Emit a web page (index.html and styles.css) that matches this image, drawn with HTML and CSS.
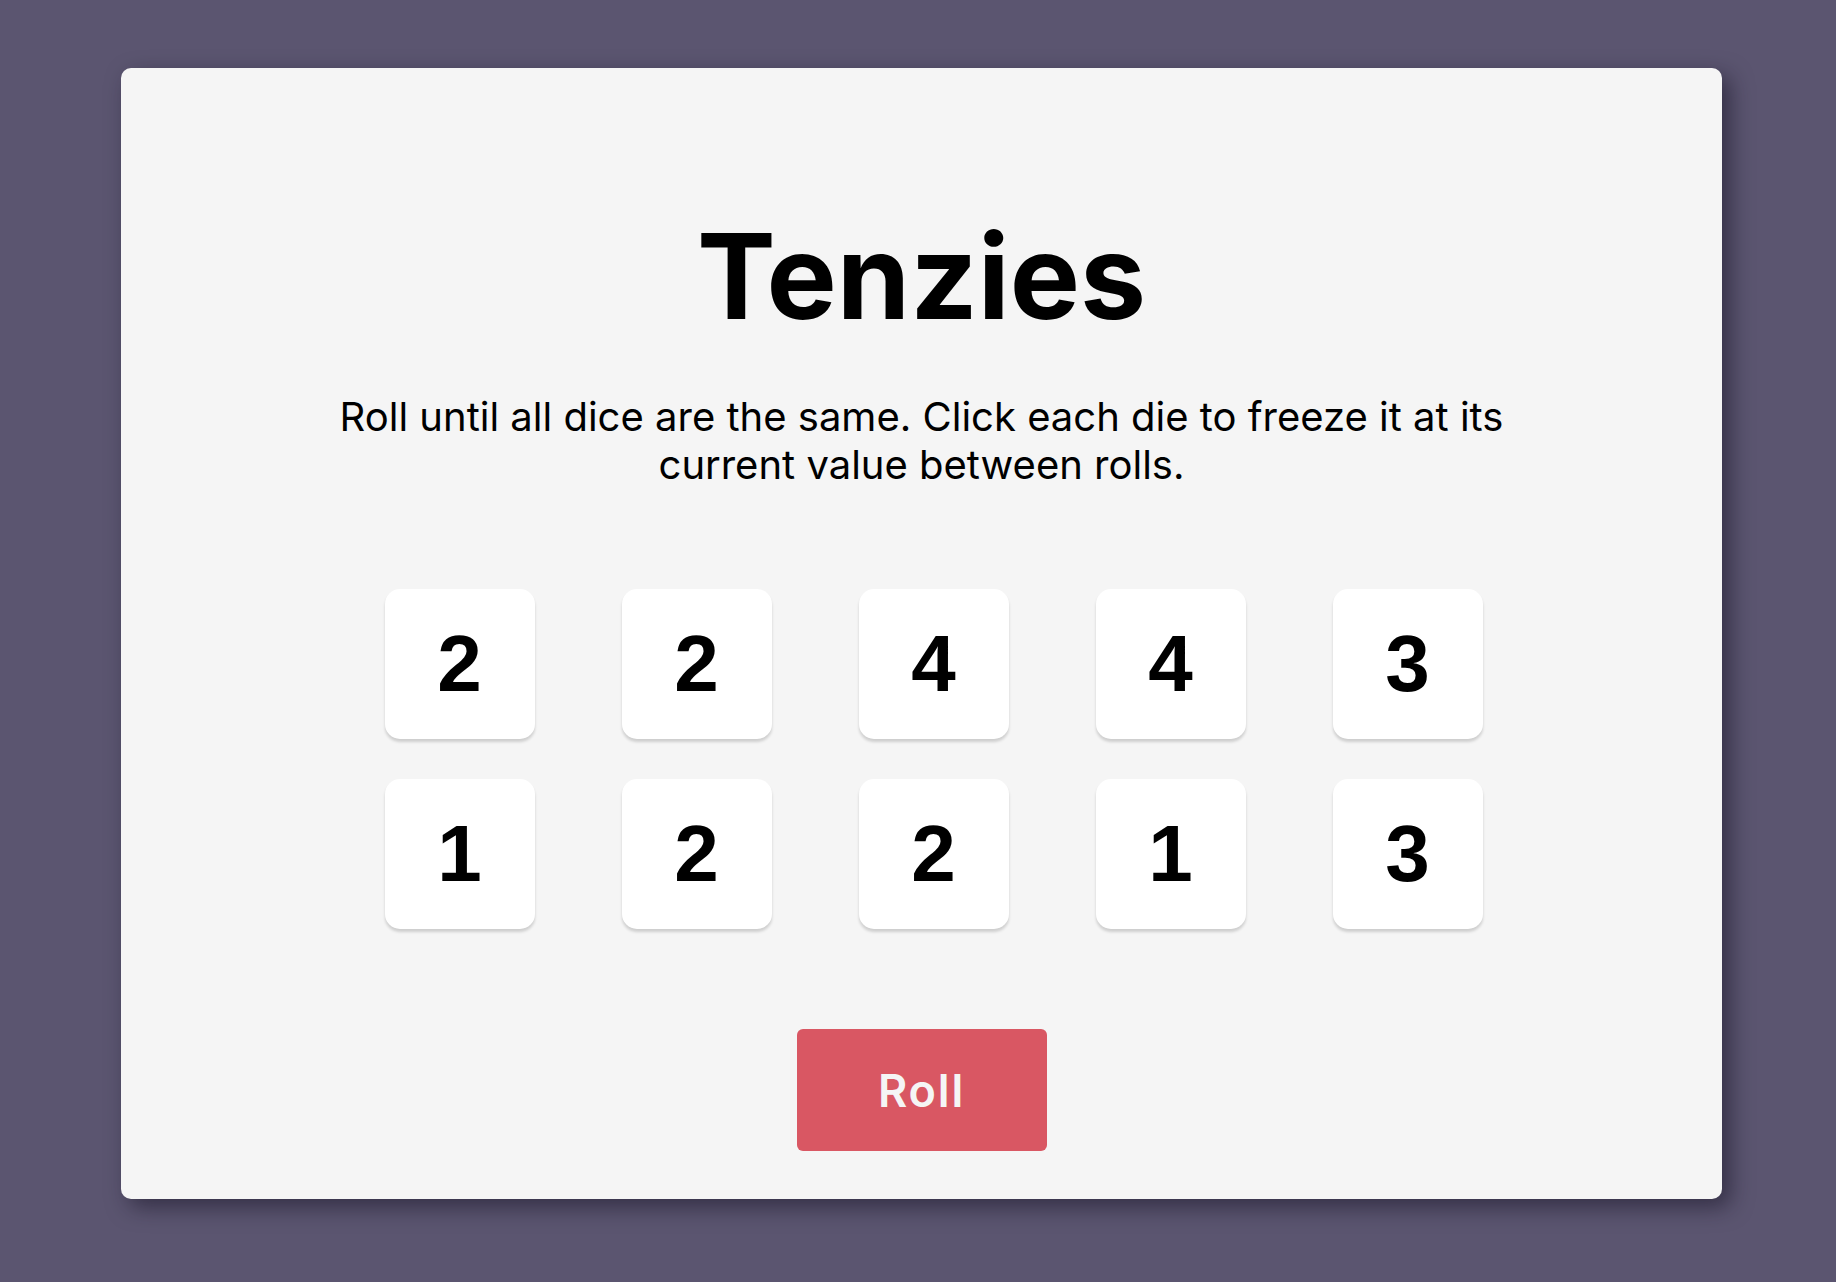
FILE: index.html
```html
<!DOCTYPE html>
<html lang="en">
<head>
<meta charset="utf-8">
<title>Tenzies</title>
<link rel="stylesheet" href="styles.css">
</head>
<body>
<main class="board">
  <h1 class="title">Tenzies</h1>
  <p class="instructions">Roll until all dice are the same. Click each die to freeze it at its current value between rolls.</p>
  <div class="dice">
    <button class="die">2</button>
    <button class="die">2</button>
    <button class="die">4</button>
    <button class="die">4</button>
    <button class="die">3</button>
    <button class="die">1</button>
    <button class="die">2</button>
    <button class="die">2</button>
    <button class="die">1</button>
    <button class="die">3</button>
  </div>
  <button class="roll">Roll</button>
</main>
</body>
</html>
```

FILE: styles.css
```css
html, body {
  margin: 0;
  padding: 0;
}

body {
  background: #5b5570;
  min-height: 1282px;
  box-sizing: border-box;
  padding: 68px 0 0 121px;
  font-family: "Inter", "Noto Sans", sans-serif;
}

.board {
  width: 1601px;
  box-sizing: border-box;
  background: #f5f5f5;
  border-radius: 10px;
  box-shadow: 8px 8px 22px rgba(20, 16, 35, 0.55);
  padding: 149px 0 48px;
  display: flex;
  flex-direction: column;
  align-items: center;
}

.title {
  margin: 0;
  font-size: 118px;
  line-height: 118px;
  font-weight: 700;
  color: #000;
}

.instructions {
  margin: 58px 0 0;
  max-width: 1220px;
  font-size: 40px;
  line-height: 48px;
  font-weight: 400;
  text-align: center;
  color: #000;
}

.dice {
  margin-top: 100px;
  display: grid;
  grid-template-columns: repeat(5, 150px);
  grid-auto-rows: 150px;
  column-gap: 87px;
  row-gap: 40px;
  padding-left: 24px;
}

.die {
  border: none;
  margin: 0;
  padding: 0;
  background: #fff;
  border-radius: 15px;
  box-shadow: 0 3px 3px rgba(0, 0, 0, 0.16);
  font-family: "Liberation Sans", Arial, sans-serif;
  font-weight: 700;
  font-size: 80px;
  color: #000;
  display: flex;
  align-items: center;
  justify-content: center;
}

.roll {
  margin-top: 100px;
  width: 250px;
  height: 122px;
  border: none;
  border-radius: 6px;
  background: #d95763;
  color: #f5f5f5;
  font-family: "Inter", "Noto Sans", sans-serif;
  font-size: 45px;
  font-weight: 600;
  letter-spacing: 1.8px;
}
```
